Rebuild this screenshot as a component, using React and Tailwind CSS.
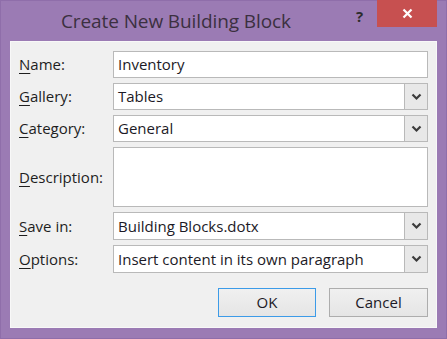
import React from 'react';

const font = { fontFamily: '"Open Sans", "Noto Sans", sans-serif' };

function Label({ first, rest }) {
    return (
        <div className="w-[102px] shrink-0 pl-[8px] text-[15px] text-[#1e1e1e]">
            <span className="underline underline-offset-[3px]">{first}</span>
            {rest}
        </div>
    );
}

function Chevron() {
    return (
        <svg width="11" height="8" viewBox="0 0 11 8">
            <path d="M1.5 1.5 L5.5 5.5 L9.5 1.5" fill="none" stroke="#3c3c3c" strokeWidth="2.2" />
        </svg>
    );
}

function TextField({ value }) {
    return (
        <div className="flex-1 h-full bg-white border border-[#b9b9b9] flex items-center pl-[4px] text-[15px] text-[#1c1a26]">
            {value}
        </div>
    );
}

function SelectField({ value }) {
    return (
        <div className="flex-1 h-full bg-white border border-[#b9b9b9] flex items-center text-[15px] text-[#1c1a26]">
            <div className="flex-1 pl-[4px] whitespace-nowrap">{value}</div>
            <div className="w-[23px] h-full bg-[#e8e8e8] border-l border-[#b9b9b9] flex items-center justify-center">
                <Chevron />
            </div>
        </div>
    );
}

export default function App() {
    return (
        <div style={font} className="w-[447px] h-[339px] bg-[#9b7bb4] border border-[#8f6eaa] flex flex-col px-[9px] pb-[10px]">
            {/* title bar */}
            <div className="h-[40px] shrink-0 flex items-start">
                <div className="flex-1 pl-[51px] pt-[6px] text-[19px] text-[#3b3040] tracking-[-0.1px]">
                    Create New Building Block
                </div>
                <div className="w-[20px] pt-[4px] text-[15px] font-bold text-[#2c2c2c]">?</div>
                <div className="w-[60px] h-[27px] bg-[#c75050] ml-[1px] -mt-[1px] flex items-center justify-center">
                    <svg width="11" height="11" viewBox="0 0 11 11">
                        <path d="M1.5 1.5 L9.5 9.5 M9.5 1.5 L1.5 9.5" stroke="#ffffff" strokeWidth="2.2" />
                    </svg>
                </div>
            </div>

            {/* body */}
            <div className="flex-1 bg-[#f0f0f0] border border-[#f8f8f8] pt-[9px] pr-[8px] flex flex-col">
                <div className="flex flex-col gap-[5px]">
                    <div className="flex items-center h-[27px]">
                        <Label first="N" rest="ame:" />
                        <TextField value="Inventory" />
                    </div>
                    <div className="flex items-center h-[27px]">
                        <Label first="G" rest="allery:" />
                        <SelectField value="Tables" />
                    </div>
                    <div className="flex items-center h-[27px]">
                        <Label first="C" rest="ategory:" />
                        <SelectField value="General" />
                    </div>
                    <div className="flex items-center h-[60px]">
                        <Label first="D" rest="escription:" />
                        <div className="flex-1 h-full bg-white border border-[#b9b9b9]" />
                    </div>
                    <div className="flex items-center h-[28px]">
                        <Label first="S" rest="ave in:" />
                        <SelectField value="Building Blocks.dotx" />
                    </div>
                    <div className="flex items-center h-[28px]">
                        <Label first="O" rest="ptions:" />
                        <SelectField value="Insert content in its own paragraph" />
                    </div>
                </div>

                <div className="flex justify-end gap-[13px] mt-[15px]">
                    <button className="w-[98px] h-[29px] bg-gradient-to-b from-[#f0f0f0] to-[#e5e5e5] border border-[#3c9be8] text-[15px] text-[#1c1a26]">
                        OK
                    </button>
                    <button className="w-[99px] h-[29px] bg-gradient-to-b from-[#f0f0f0] to-[#e5e5e5] border border-[#adadad] text-[15px] text-[#1c1a26]">
                        Cancel
                    </button>
                </div>
            </div>
        </div>
    );
}
